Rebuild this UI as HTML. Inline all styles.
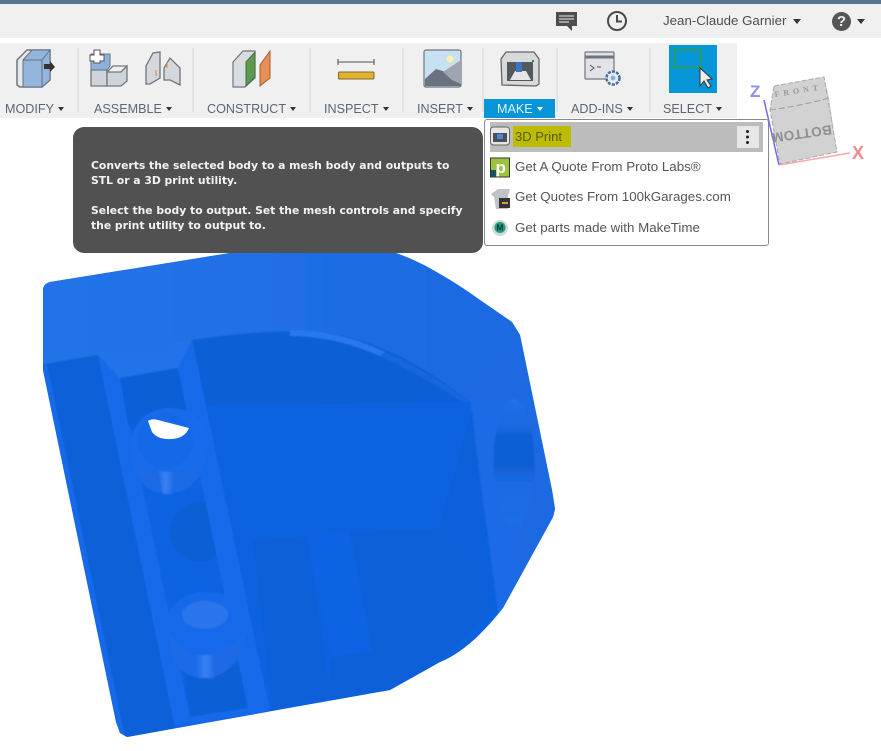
<!DOCTYPE html>
<html><head><meta charset="utf-8"><style>
html,body{margin:0;padding:0;background:#fff}
body{width:881px;height:751px;position:relative;overflow:hidden;font-family:"Liberation Sans",sans-serif}
.a{position:absolute}
.lb{position:absolute;top:102px;font-size:12.6px;line-height:15px;color:#5d6675;white-space:nowrap;filter:blur(.3px)}
.lb i{display:inline-block;width:0;height:0;border:3.5px solid transparent;border-top:4px solid #333;border-bottom:0;margin-left:4px;vertical-align:2px}
.sep{position:absolute;top:48px;width:2px;height:64px;background:#e2e2e2}
.mi{position:absolute;left:515px;font-size:13.35px;line-height:16px;color:#555;white-space:nowrap;filter:blur(.3px)}
.tt{position:absolute;left:91px;font:bold 10.8px/15px "DejaVu Sans",sans-serif;color:#f2f2f2;white-space:nowrap;filter:blur(.2px)}
</style></head><body>
<div class="a" style="left:0;top:0;width:881px;height:4px;background:#58758f"></div>
<div class="a" style="left:0;top:4px;width:881px;height:34px;background:#f0f0f0"></div>
<div class="a" style="left:0;top:43px;width:737px;height:75px;background:#f0f0f0"></div>

<!-- part -->
<svg class="a" style="left:0;top:0" width="881" height="751" viewBox="0 0 881 751">
<defs>
<clipPath id="p"><path id="pp" d="M43 290Q43 284 50 282L230 253L390 251Q412 258 433 270Q458 284 480 300L512 322L520 335L552 490L555 509L553 517L503 608Q470 650 440 662L390 690L127 737L120 733L116 722L43 370Z"/></clipPath>
<linearGradient id="hole" x1="0" y1="0" x2="0" y2="1"><stop offset="0" stop-color="#2070e8"/><stop offset=".22" stop-color="#1a68e0"/><stop offset=".28" stop-color="#115fd4"/><stop offset=".52" stop-color="#115fd4"/><stop offset=".66" stop-color="#1a6ae4"/><stop offset="1" stop-color="#1e6de6"/></linearGradient>
<linearGradient id="top" x1="0" y1="0" x2="1" y2="0"><stop offset="0" stop-color="#2373e8"/><stop offset="1" stop-color="#1c69e0"/></linearGradient>
<linearGradient id="hl" x1="0" y1="0" x2="1" y2="0"><stop offset="0" stop-color="#1a6be6"/><stop offset=".5" stop-color="#3a80f2"/><stop offset="1" stop-color="#1a6be6"/></linearGradient>
<filter id="b" x="-5%" y="-5%" width="110%" height="110%"><feGaussianBlur stdDeviation=".7"/></filter>
</defs>
<use href="#pp" fill="#0b62e0"/>
<g clip-path="url(#p)"><g filter="url(#b)">
<!-- main floor -->
<path d="M190 340H480V700H190Z" fill="#0b62e0"/>
<!-- top facet -->
<path d="M30 240H420L540 320L470 402Q400 345 330 333Q270 328 192 340L98 355L46 364L30 372Z" fill="url(#top)"/>
<!-- arc recess -->
<path d="M192 340Q270 328 330 333Q400 345 470 402L205 405Z" fill="#0e5fd6"/>
<path d="M290 330Q340 330 385 352L380 356Q335 336 290 336Z" fill="#2a78ee"/>
<path d="M385 352Q430 372 470 402L462 402Q420 374 380 356Z" fill="#1766dc"/>
<!-- right facet -->
<path d="M470 402L525 330L570 520L503 612L498 612Z" fill="#1c69e2"/>
<path d="M472 402H525L510 595L498 612Z" fill="#176ae8"/>
<path d="M472 402L498 612L520 585L525 402Z" fill="#1b6ae6"/>
<path d="M472 410L494 612L385 695L340 600L440 525Z" fill="#0c60da"/>
<!-- left strips -->
<path d="M30 366L46 364L98 355L175 727L122 745Z" fill="#0f60d8"/>
<path d="M30 372L47 364L125 737L112 730Z" fill="#1569e8"/>
<!-- rails -->
<path d="M98 355L192 340L270 712L175 727Z" fill="#166bea"/>
<path d="M98 355L192 340L178 368L120 378Z" fill="#2272ea"/>
<!-- recess -->
<path d="M120 378L178 368L248 708L190 717Z" fill="#0b63e2"/>
<path d="M120 378L178 368L190 425Q165 455 128 425Z" fill="#0e5fd6"/>
<path d="M183 665Q205 690 240 660L248 708L190 717Z" fill="#0e5fd6"/>
<circle cx="200" cy="532" r="30" fill="#0f5fd4"/>
<path d="M178 368L192 340L270 712L248 708Z" fill="#166bea"/>
<path d="M150 500L90 512L98 540L156 530Z" fill="#0f60d8" opacity=".0"/>
<!-- lower blocks -->
<path d="M253 540L307 537L331 698L272 710Z" fill="#0f60d8"/>
<path d="M307 537L350 531L372 650L332 658Z" fill="#0c64e4"/>
<path d="M331 658L372 650L400 688L330 700Z" fill="#0f60d8"/>
<path d="M350 533L392 530L440 530L490 610L440 662L390 690L372 650Z" fill="#0f60d8"/>
<!-- upper counterbore -->
<path d="M131 440Q130 492 168 494Q205 490 208 445Z" fill="#1a6be6"/>
<path d="M157 465H174L172 494H163Z" fill="url(#hl)"/>
<ellipse cx="170" cy="440" rx="38" ry="32" fill="#146cea"/>
<ellipse cx="165" cy="441" rx="28" ry="28" fill="#1269e6"/>
<!-- lower counterbore -->
<path d="M168 625Q168 678 205 678Q240 675 247 628Z" fill="#1a6be6"/>
<path d="M196 650H212L215 678H198Z" fill="url(#hl)"/>
<ellipse cx="206" cy="622" rx="39" ry="30" fill="#126aea"/>
<ellipse cx="203" cy="627" rx="28" ry="28" fill="#1469ea"/>
<ellipse cx="205" cy="615" rx="23" ry="14" fill="#2a75ea"/>
<!-- side hole -->
<ellipse cx="514" cy="463" rx="20.500" ry="64" fill="url(#hole)"/>
</g></g>
<path d="M148 421Q152 418 158 420L189 428Q185 438 172 439Q158 440 152 432Z" fill="#fff"/>
</svg>

<!-- toolbar separators -->
<div class="sep" style="left:77px"></div><div class="sep" style="left:192px"></div><div class="sep" style="left:309px"></div><div class="sep" style="left:402px"></div><div class="sep" style="left:482px"></div><div class="sep" style="left:556px"></div><div class="sep" style="left:649px"></div>

<!-- Icons -->
<svg class="a" style="left:0;top:43px" width="737" height="60" viewBox="0 43 737 60">
<!-- modify -->
<path d="M17 85V60L27 50H50V80L42 87H20Z" fill="#e6e8ec" stroke="#70757d" stroke-width="1.500"/>
<path d="M23 60L32 50H50V80L42 87H23Z" fill="#93b5dc" stroke="#65707e"/>
<path d="M23 60H42V87M42 60L50 50" fill="none" stroke="#65707e"/>
<path d="M44 64H50V61L55 67L50 72V69H44Z" fill="#333"/>
<!-- assemble -->
<path d="M91 70H107V86H91Z" fill="#cfd4da" stroke="#72777e" stroke-width="1.300"/>
<path d="M107 72H121L127 66V81L121 86H107Z" fill="#cfd4da" stroke="#72777e" stroke-width="1.300"/>
<path d="M107 72L113 66H127" fill="none" stroke="#72777e" stroke-width="1.300"/>
<path d="M91 54H110V66L107 70H91Z" fill="#8fb0da" stroke="#6c7686"/>
<path d="M94 50H100V55H104V61H100V63H94V61H90V55H94Z" fill="#fff" stroke="#555"/>
<path d="M146 84V66L153 53L160 52V78L150 84ZM164 68L170 58L180 68V85L170 80H164Z" fill="#d4d8dd" stroke="#6f747b" stroke-width="1.300"/>
<path d="M156 70V76M167 62V68" stroke="#e98c3c" stroke-width="1.200"/>
<!-- construct -->
<path d="M233 62L243 51H255V78L245 87H233Z" fill="#d9dce1" stroke="#70757d" stroke-width="1.200"/>
<path d="M246 62L255 52V77L246 86Z" fill="#5c9a4e" stroke="#4c6b46"/>
<path d="M260 65L270 51V78L260 86Z" fill="#e88f55" stroke="#a05f34"/>
<!-- inspect -->
<path d="M338 59V65M374 59V65" stroke="#444"/><path d="M338 62H374" stroke="#555"/>
<rect x="338.500" y="72" width="35.500" height="7" rx="1" fill="#e0b22e" stroke="#7a6a30"/>
<!-- insert -->
<rect x="424" y="50" width="37" height="37" rx="2" fill="#c7e0f2" stroke="#70757d" stroke-width="1.200"/>
<path d="M425 79L436 69L446 72L461 84V86H425Z" fill="#6a7280"/>
<path d="M443 72L461 60V84L452 80Z" fill="#9ca5b0"/>
<circle cx="450" cy="59" r="3.500" fill="#fbf0b0"/>
<!-- make -->
<path d="M502 85L501 59L506 52H534L539 59V84L536 86Z" fill="#d8d9db" stroke="#666" stroke-width="1.300"/>
<rect x="507" y="62" width="26" height="19" fill="#515860"/>
<path d="M510 80L515 71H526L531 80Z" fill="#e5e5e5"/>
<rect x="516" y="62" width="6" height="10" fill="#3c73c4"/>
<rect x="532" y="60" width="2" height="2" fill="#3a8a3a"/>
<!-- add-ins -->
<rect x="585" y="52" width="29" height="27" rx="1" fill="#e1e3e7" stroke="#737780" stroke-width="1.200"/>
<path d="M585 57H614" stroke="#70757d" stroke-width="3"/>
<path d="M590 65L594 68L590 71M597 67H601" fill="none" stroke="#555"/>
<circle cx="613" cy="78" r="6.500" fill="#e6eef8" stroke="#4d6e9c" stroke-width="2.500" stroke-dasharray="3 1.200"/>
<circle cx="613" cy="78" r="2.500" fill="#8eb0d8"/>
<!-- select -->
<rect x="669" y="45" width="48" height="48" fill="#0696d7"/>
<rect x="674.500" y="50" width="26" height="17.500" fill="none" stroke="#3a9a3f" stroke-width="1.500"/>
<path d="M700 68V86L704 81L708 88L711 86L707 80L712 79Z" fill="#eee" stroke="#333"/>
</svg>

<div class="a" style="left:484px;top:99px;width:71px;height:19px;background:#0696d7"></div>
<div class="lb" style="left:5px">MODIFY<i></i></div>
<div class="lb" style="left:94px">ASSEMBLE<i></i></div>
<div class="lb" style="left:207px">CONSTRUCT<i></i></div>
<div class="lb" style="left:324px">INSPECT<i></i></div>
<div class="lb" style="left:417px">INSERT<i></i></div>
<div class="lb" style="left:497px;color:#e3f3fb">MAKE<i style="border-top-color:#fff"></i></div>
<div class="lb" style="left:571px">ADD-INS<i></i></div>
<div class="lb" style="left:663px">SELECT<i></i></div>

<!-- top right -->
<svg class="a" style="left:550px;top:8px" width="80" height="26" viewBox="0 0 80 26">
<path d="M6 4H27V18H22V23L17 18H6Z" fill="#4d4d4d"/><path d="M9 8H24M9 11H24M9 14H19" stroke="#f0f0f0"/>
<circle cx="67" cy="13" r="9" fill="none" stroke="#4a4a4a" stroke-width="2"/><path d="M67 7V13.500H72" fill="none" stroke="#4a4a4a" stroke-width="2"/>
</svg>
<div class="a" style="left:663px;top:13px;font-size:13.3px;line-height:16px;color:#4e4e4e;white-space:nowrap;filter:blur(.2px)">Jean-Claude Garnier</div>
<div class="a" style="left:793px;top:19px;width:0;height:0;border:4px solid transparent;border-top:5px solid #333;border-bottom:0"></div>
<div class="a" style="left:832px;top:12px;width:19px;height:19px;border-radius:50%;background:#555;color:#eee;font:bold 15px/19px 'Liberation Sans',sans-serif;text-align:center">?</div>
<div class="a" style="left:857px;top:19px;width:0;height:0;border:4px solid transparent;border-top:5px solid #333;border-bottom:0"></div>

<!-- viewcube -->
<svg class="a" style="left:745px;top:70px" width="136" height="100" viewBox="745 70 136 100" font-family="'Liberation Sans',sans-serif">
<path d="M770 110L774 86L824 77L829 98L837 152L780 164Z" fill="#d2d2d2"/>
<path d="M770 110Q800 106 829 98" fill="none" stroke="#999" stroke-dasharray="6 3"/>
<path d="M774 86L824 77L837 152L780 164L770 110Z" fill="none" stroke="#aaa" stroke-dasharray="5 2"/>
<path d="M764 100L779 165" stroke="#6c6cf0" stroke-width="1.500"/>
<path d="M779 165L850 153" stroke="#f7a8a8" stroke-width="1.500"/>
<text x="750" y="97" font-size="17" font-weight="bold" fill="#8e8ef5">Z</text>
<text x="852" y="159" font-size="18" font-weight="bold" fill="#f08a8a">X</text>
<text transform="translate(775 97) rotate(-9)" font-size="8" font-weight="bold" fill="#999" font-family="'Liberation Serif',serif" textLength="44">FRONT</text>
<text transform="translate(831 125) rotate(172)" font-size="13.500" font-weight="bold" fill="#8f8f8f" textLength="60">BOTTOM</text>
</svg>

<!-- tooltip -->
<div class="a" style="left:73px;top:127px;width:410px;height:126px;border-radius:11px;background:#515151"></div>
<div class="tt" style="top:158px">Converts the selected body to a mesh body and outputs to</div>
<div class="tt" style="top:173px">STL or a 3D print utility.</div>
<div class="tt" style="top:203px">Select the body to output. Set the mesh controls and specify</div>
<div class="tt" style="top:218px">the print utility to output to.</div>

<!-- menu -->
<div class="a" style="left:484px;top:119px;width:283px;height:125px;background:#fff;border:1px solid #8a8a8a;border-radius:3px"></div>
<div class="a" style="left:490px;top:122px;width:273px;height:30px;background:#bcbcbc"></div>
<div class="a" style="left:513px;top:126px;width:58px;height:21px;background:#bcbc00"></div>
<div class="a" style="left:737px;top:126px;width:22px;height:22px;background:#e6e6e6"></div>
<div class="a" style="left:746px;top:130px;width:3px;height:3px;border-radius:50%;background:#222;box-shadow:0 5.500px 0 #222,0 11px 0 #222"></div>
<div class="mi" style="top:129px;color:#5a5a10;font-size:13px">3D Print</div>
<div class="mi" style="top:159px">Get A Quote From Proto Labs®</div>
<div class="mi" style="top:189px">Get Quotes From 100kGarages.com</div>
<div class="mi" style="top:220px">Get parts made with MakeTime</div>
<svg class="a" style="left:488px;top:122px" width="26" height="120" viewBox="0 0 26 120" font-family="'Liberation Sans',sans-serif">
<rect x="2.500" y="5" width="19" height="18" rx="3" fill="#e6e6e6" stroke="#666"/><rect x="5" y="11" width="14" height="9" fill="#4a5058"/><rect x="9" y="12" width="6" height="5" fill="#4f86d0"/>
<rect x="2.500" y="36" width="19" height="19" fill="#9cc43c" stroke="#333"/><rect x="3" y="48" width="5" height="7" fill="#1d4f66"/><text x="7.500" y="51" font-size="17" font-weight="bold" fill="#fff">p</text>
<path d="M3 72L10 67H22L20 74V87H8L6 75Z" fill="#bfc3c7"/><rect x="11" y="76" width="11" height="10" fill="#333"/><rect x="14" y="80" width="6" height="2" fill="#d8a030"/>
<circle cx="12" cy="106" r="8" fill="#d5d5d5"/><circle cx="12" cy="105.500" r="5.500" fill="#13a483"/><text x="12" y="108.500" font-size="8" font-weight="bold" text-anchor="middle" fill="#123">M</text>
</svg>
</body></html>
